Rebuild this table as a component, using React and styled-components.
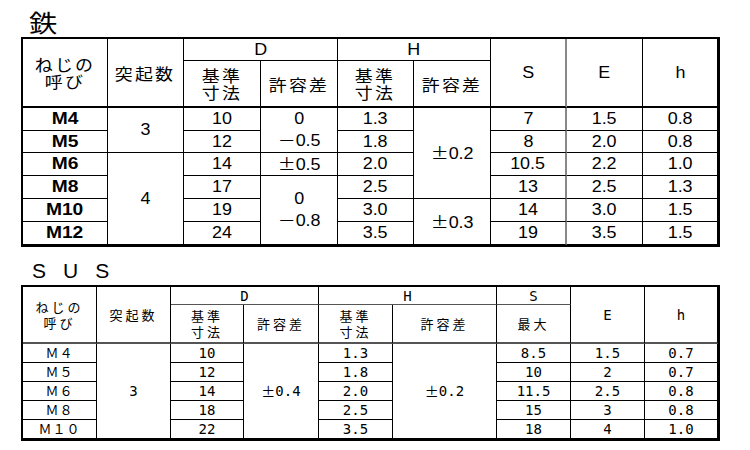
import React from 'react'
import styled, { createGlobalStyle } from 'styled-components'

const GlobalStyle = createGlobalStyle`
  body {
    margin: 0;
    background: #fff;
    color: #000;
  }
`

const Page = styled.div`
  width: 750px;
  height: 450px;
  box-sizing: border-box;
  padding-left: 21px;
  display: flex;
  flex-direction: column;
  overflow: hidden;
`

const KanjiTitle = styled.div`
  height: 37px;
  box-sizing: border-box;
  padding: 10px 0 0 8px;
  font-family: "Noto Sans CJK JP", sans-serif;
  font-size: 24px;
  line-height: 24px;

  span {
    display: inline-block;
    transform: scaleX(1.18);
    transform-origin: left center;
  }
`

const LatinTitle = styled.div`
  height: 38px;
  box-sizing: border-box;
  padding: 13px 0 0 11px;
  font-family: "Liberation Sans", Arial, sans-serif;
  font-size: 21px;
  line-height: 21px;
  letter-spacing: 17px;
`

const Sheet = styled.div`
  display: grid;
  grid-template-columns: ${p => p.$cols.map(c => `${c}px`).join(' ')};
  grid-template-rows: ${p => p.$rows.map(r => `${r}px`).join(' ')};
  width: max-content;
  border: 2px solid #000;
  font-family: ${p =>
    p.$mono
      ? '"DejaVu Sans Mono", "Noto Sans CJK JP", monospace'
      : '"Liberation Sans", "Noto Sans CJK JP", Arial, sans-serif'};
  font-size: ${p => (p.$mono ? '14px' : '16px')};
`

const Cell = styled.div`
  grid-row: span ${p => p.$rs || 1};
  grid-column: span ${p => p.$cs || 1};
  box-sizing: border-box;
  border-right: ${p => p.$rw || 1}px solid ${p => p.$rc || '#000'};
  border-bottom: ${p => p.$bw || 1}px solid ${p => p.$bc || '#000'};
  display: flex;
  align-items: center;
  justify-content: center;
  text-align: center;
  overflow: hidden;
  font-weight: ${p => (p.$bold ? 700 : 400)};
`

// the scan is stretched sideways, so the iron table text is widened a bit
const Wide = styled.span`
  display: inline-block;
  transform: scaleX(${p => p.$sx || 1.12});
  line-height: ${p => p.$lh || 18}px;
`

const Jp = styled.span`
  display: inline-block;
  font-family: "Noto Sans CJK JP", sans-serif;
  font-size: ${p => p.$size || 16}px;
  line-height: ${p => p.$lh || 18}px;
  letter-spacing: ${p => p.$ls || 2}px;
  transform: scaleX(${p => p.$sx || 1});
`

const Sign = styled.span`
  font-family: "Noto Sans CJK JP", sans-serif;
`

const ironRows = [
  ['M4', { t: '3', rs: 2 }, '10', { t: ['0', '－0.5'], rs: 2 }, '1.3', { t: '±0.2', rs: 4 }, '7', '1.5', '0.8'],
  ['M5', '12', '1.8', '8', '2.0', '0.8'],
  ['M6', { t: '4', rs: 4 }, '14', '±0.5', '2.0', '10.5', '2.2', '1.0'],
  ['M8', '17', { t: ['0', '－0.8'], rs: 3 }, '2.5', '13', '2.5', '1.3'],
  ['M10', '19', '3.0', { t: '±0.3', rs: 2 }, '14', '3.0', '1.5'],
  ['M12', '24', '3.5', '19', '3.5', '1.5']
]

const susRows = [
  ['Ｍ４', { t: '3', rs: 5 }, '10', { t: '±0.4', rs: 5 }, '1.3', { t: '±0.2', rs: 5 }, '8.5', '1.5', '0.7'],
  ['Ｍ５', '12', '1.8', '10', '2', '0.7'],
  ['Ｍ６', '14', '2.0', '11.5', '2.5', '0.8'],
  ['Ｍ８', '18', '2.5', '15', '3', '0.8'],
  ['Ｍ１０', '22', '3.5', '18', '4', '1.0']
]

const norm = c => (typeof c === 'string' ? { t: c } : c)

// minus and plus-minus come from the Japanese font, as in the printed sheet
const line = s =>
  /^[－±]/.test(s) ? (
    <>
      <Sign>{s[0]}</Sign>
      {s.slice(1)}
    </>
  ) : (
    s
  )

const renderValue = t =>
  Array.isArray(t) ? t.map((l, i) => <div key={i}>{line(l)}</div>) : line(t)

const IronTable = () => (
  <Sheet $cols={[85, 76, 77, 77, 76, 77, 76, 76, 75]} $rows={[22, 47, 23, 22, 23, 23, 23, 23]}>
    <Cell $rs={2} $bw={2}>
      <Jp $lh={17} $sx={1.12}>ねじの<br />呼び</Jp>
    </Cell>
    <Cell $rs={2} $bw={2}>
      <Jp $sx={1.12}>突起数</Jp>
    </Cell>
    <Cell $cs={2}><Wide>D</Wide></Cell>
    <Cell $cs={2}><Wide>H</Wide></Cell>
    <Cell $rs={2} $bw={2} $rc="#888" $rw={2}><Wide>S</Wide></Cell>
    <Cell $rs={2} $bw={2}><Wide>E</Wide></Cell>
    <Cell $rs={2} $bw={2}><Wide>h</Wide></Cell>
    <Cell $bw={2}><Jp $lh={17} $sx={1.12}>基準<br />寸法</Jp></Cell>
    <Cell $bw={2}><Jp $sx={1.12}>許容差</Jp></Cell>
    <Cell $bw={2}><Jp $lh={17} $sx={1.12}>基準<br />寸法</Jp></Cell>
    <Cell $bw={2}><Jp $sx={1.12}>許容差</Jp></Cell>
    {ironRows.map((row, r) =>
      row.map((raw, i) => {
        const c = norm(raw)
        const sCol = i === row.length - 3
        return (
          <Cell
            key={`${r}-${i}`}
            $rs={c.rs}
            $bold={i === 0}
            $rc={sCol ? '#888' : undefined}
            $rw={sCol ? 2 : 1}
          >
            <Wide $sx={i === 0 ? 1.2 : 1.12} $lh={Array.isArray(c.t) ? 20 : 18}>
              {renderValue(c.t)}
            </Wide>
          </Cell>
        )
      })
    )}
  </Sheet>
)

const SusTable = () => (
  <Sheet $mono $cols={[74, 74, 73, 75, 74, 104, 74, 74, 73]} $rows={[18, 39, 19, 19, 19, 19, 19]}>
    <Cell $rs={2} $bw={2} $bc="#555">
      <Jp $size={13} $lh={16} $ls={3}>ねじの<br />呼び</Jp>
    </Cell>
    <Cell $rs={2} $bw={2} $bc="#555">
      <Jp $size={13} $ls={3}>突起数</Jp>
    </Cell>
    <Cell $cs={2} $bc="#555">D</Cell>
    <Cell $cs={2} $bc="#555">H</Cell>
    <Cell $bc="#555">S</Cell>
    <Cell $rs={2} $bw={2} $bc="#555">E</Cell>
    <Cell $rs={2} $bw={2} $bc="#555">h</Cell>
    <Cell $bw={2} $bc="#555"><Jp $size={13} $lh={16} $ls={3}>基準<br />寸法</Jp></Cell>
    <Cell $bw={2} $bc="#555"><Jp $size={13} $ls={3}>許容差</Jp></Cell>
    <Cell $bw={2} $bc="#555"><Jp $size={13} $lh={16} $ls={3}>基準<br />寸法</Jp></Cell>
    <Cell $bw={2} $bc="#555"><Jp $size={13} $ls={3}>許容差</Jp></Cell>
    <Cell $bw={2} $bc="#555"><Jp $size={13} $ls={3}>最大</Jp></Cell>
    {susRows.map((row, r) =>
      row.map((raw, i) => {
        const c = norm(raw)
        return (
          <Cell key={`${r}-${i}`} $rs={c.rs}>
            {i === 0 ? <Jp $size={13} $ls={1}>{c.t}</Jp> : line(c.t)}
          </Cell>
        )
      })
    )}
  </Sheet>
)

export default function App() {
  return (
    <>
      <GlobalStyle />
      <Page>
        <KanjiTitle>
          <span>鉄</span>
        </KanjiTitle>
        <IronTable />
        <LatinTitle>SUS</LatinTitle>
        <SusTable />
      </Page>
    </>
  )
}
